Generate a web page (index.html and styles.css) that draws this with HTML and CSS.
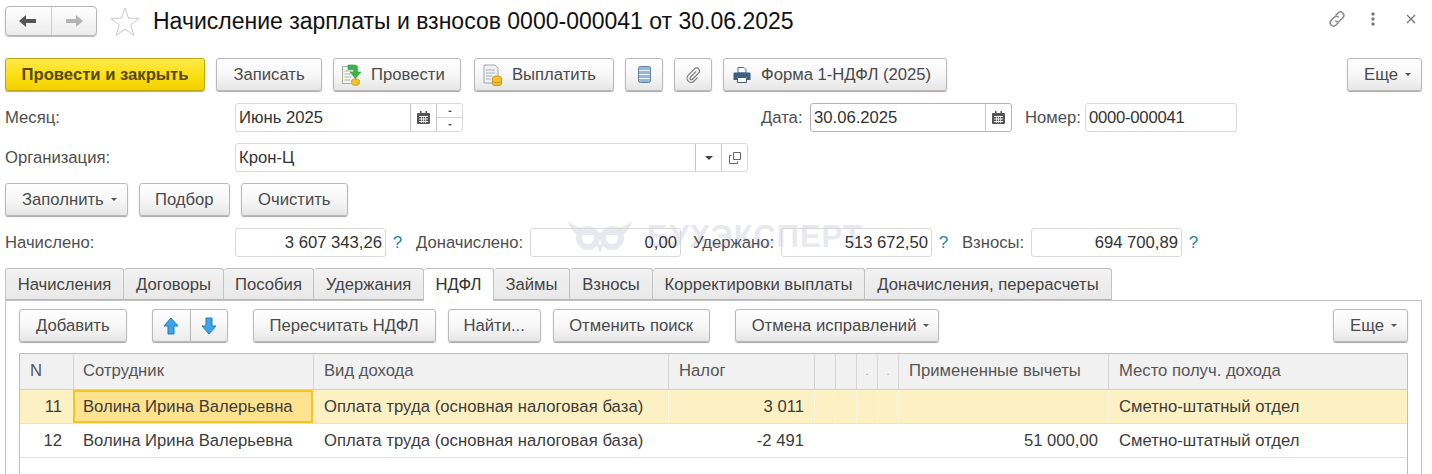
FILE: index.html
```html
<!DOCTYPE html>
<html lang="ru">
<head>
<meta charset="utf-8">
<title>Начисление зарплаты и взносов</title>
<link rel="stylesheet" href="styles.css">
</head>
<body>
<div class="page">
  <header class="head">
    <div class="nav">
      <span class="nav-btn"><svg width="18" height="14" viewBox="0 0 18 14"><path d="M0 7l7-6v4h10v4H7v4z" fill="#555"/></svg></span>
      <span class="nav-btn"><svg width="18" height="14" viewBox="0 0 18 14"><path d="M18 7l-7-6v4H1v4h10v4z" fill="#b4b4b4"/></svg></span>
    </div>
    <svg class="star" width="30" height="30" viewBox="0 0 30 30"><path d="M15 1l3.600 10.200 10.600.2-8.400 6.500 3 10.400L15 22.200l-8.800 6.100 3-10.400L.8 11.400l10.600-.2z" fill="none" stroke="#c9c9c9"/></svg>
    <h1 class="title">Начисление зарплаты и взносов 0000-000041 от 30.06.2025</h1>
    <div class="win-icons">
      <svg width="20" height="20" viewBox="0 0 20 20" fill="none" stroke="#8a8a8a" stroke-width="1.500"><path d="M8.500 6.500l2.500-2.500a3.300 3.300 0 0 1 4.800 4.700l-3 3a3.300 3.300 0 0 1-4.500 0"/><path d="M11.500 13.500L9 16a3.300 3.300 0 0 1-4.800-4.700l3-3a3.300 3.300 0 0 1 4.500 0"/></svg>
      <svg width="6" height="14" viewBox="0 0 6 14" fill="#777"><circle cx="3" cy="2" r="1.700"/><circle cx="3" cy="7" r="1.700"/><circle cx="3" cy="12" r="1.700"/></svg>
      <svg class="win-close" width="10" height="10" viewBox="0 0 10 10" stroke="#777" stroke-width="1.300"><path d="M1 1l8 8M9 1L1 9"/></svg>
    </div>
  </header>

  <div class="bar bar-command">
    <button class="btn btn-primary">Провести и закрыть</button>
    <button class="btn btn-save">Записать</button>
    <button class="btn btn-ico btn-post">
      <svg width="20" height="22" viewBox="0 0 20 22"><path d="M.5 2.500h11l2 2v15H.5z" fill="#f4f5ef" stroke="#a3ae9f"/><path d="M2.500 7h7M2.500 10h6M2.500 13h7M2.500 16h6" stroke="#a5b8a6"/><path d="M6 1h7a2.500 2.500 0 0 1 2.500 2.500V8H19l-5.500 6.500L8 8h3.500V5.500H6z" fill="#3cb44a" stroke="#2a9a3c" stroke-width=".6"/><ellipse cx="13.500" cy="16.500" rx="3.800" ry="1.700" fill="#f3c32c" stroke="#c9951a" stroke-width=".8"/><path d="M9.700 16.500v3.300c0 .9 1.700 1.500 3.800 1.500s3.800-.6 3.800-1.500v-3.300" fill="#f3c32c" stroke="#c9951a" stroke-width=".8"/></svg>
      Провести</button>
    <button class="btn btn-ico btn-pay">
      <svg width="20" height="24" viewBox="0 0 20 24"><path d="M1 2h11l3 3v15H1z" fill="#eef0f2" stroke="#a0a8b2"/><path d="M3 7h9M3 10h9M3 13h6M3 16h5" stroke="#a9b4c0"/><ellipse cx="14" cy="15" rx="4.500" ry="2" fill="#f3c32c" stroke="#c9951a"/><path d="M9.500 15v6c0 1 2 1.600 4.500 1.600s4.500-.6 4.500-1.600v-6" fill="#f3c32c" stroke="#c9951a"/><path d="M9.500 18c0 1 2 1.600 4.500 1.600s4.500-.6 4.500-1.600" fill="none" stroke="#c9951a"/></svg>
      Выплатить</button>
    <button class="btn btn-square"><svg width="13" height="17" viewBox="0 0 13 17"><rect x=".5" y=".5" width="12" height="16" rx="2" fill="#93b8d8" stroke="#5f83a2"/><path d="M1 4.500h11M1 8.500h11M1 12.500h11" stroke="#eaf1f7" stroke-width="1.100"/></svg></button>
    <button class="btn btn-square"><svg width="16" height="16" viewBox="0 0 18 18" fill="none" stroke="#7a7a7a" stroke-width="1.300"><path d="M12.500 5L6 11.500a1.600 1.600 0 0 0 2.300 2.300l7-7a3.200 3.200 0 0 0-4.600-4.600L3.500 9.500a4.600 4.600 0 0 0 6.500 6.500l4-4"/></svg></button>
    <button class="btn btn-ico btn-print">
      <svg width="18" height="16" viewBox="0 0 18 16"><path d="M5 .5h6l2 2V6H5z" fill="#fff" stroke="#55708c"/><path d="M1.500 5.500h15a1 1 0 0 1 1 1V13H14v-3H4v3H.5V6.500a1 1 0 0 1 1-1z" fill="#3f5f80"/><path d="M4.500 10.500h9v5h-9z" fill="#fff" stroke="#3f5f80"/></svg>
      Форма 1-НДФЛ (2025)</button>
    <button class="btn btn-more btn-end">Еще<i class="caret"></i></button>
  </div>

  <div class="row row-month">
    <label class="lbl lbl-first">Месяц:</label>
    <div class="field w-month">
      <span class="val">Июнь 2025</span>
      <span class="fb"><svg class="cal" width="13" height="13" viewBox="0 0 13 13"><path d="M1 2h11a1 1 0 0 1 1 1v9a1 1 0 0 1-1 1H1a1 1 0 0 1-1-1V3a1 1 0 0 1 1-1z" fill="#555"/><path d="M3 0h1.500v3H3zM8.500 0H10v3H8.500z" fill="#555"/><path d="M2 5.500h9M2 8h9M2 10.500h9" stroke="#fff" stroke-width=".9"/><path d="M4.500 5v7M6.500 5v7M8.500 5v7" stroke="#fff" stroke-width=".7"/></svg></span>
      <span class="fb spin"><i class="spin-up"></i><i class="spin-down"></i></span>
    </div>
    <label class="lbl lbl-date">Дата:</label>
    <div class="field field-strong w-date">
      <span class="val">30.06.2025</span>
      <span class="fb"><svg class="cal" width="13" height="13" viewBox="0 0 13 13"><path d="M1 2h11a1 1 0 0 1 1 1v9a1 1 0 0 1-1 1H1a1 1 0 0 1-1-1V3a1 1 0 0 1 1-1z" fill="#555"/><path d="M3 0h1.500v3H3zM8.500 0H10v3H8.500z" fill="#555"/><path d="M2 5.500h9M2 8h9M2 10.500h9" stroke="#fff" stroke-width=".9"/><path d="M4.500 5v7M6.500 5v7M8.500 5v7" stroke="#fff" stroke-width=".7"/></svg></span>
    </div>
    <label class="lbl lbl-num">Номер:</label>
    <div class="field w-num"><span class="val">0000-000041</span></div>
  </div>

  <div class="row row-org">
    <label class="lbl lbl-first">Организация:</label>
    <div class="field w-org">
      <span class="val">Крон-Ц</span>
      <span class="fb"><i class="caret caret-dark"></i></span>
      <span class="fb"><svg width="12" height="12" viewBox="0 0 12 12" fill="none" stroke="#666"><path d="M4.500.5h7v7h-7z"/><path d="M2.500 3.500h-2v8h8V9.500"/></svg></span>
    </div>
  </div>

  <div class="bar bar-fill">
    <button class="btn btn-more">Заполнить<i class="caret"></i></button>
    <button class="btn btn-pick">Подбор</button>
    <button class="btn btn-clear">Очистить</button>
  </div>

  <div class="row row-totals">
    <label class="lbl lbl-first">Начислено:</label>
    <div class="field w-sum"><span class="val num">3 607 343,26</span></div>
    <a class="help">?</a>
    <label class="lbl lbl-acc">Доначислено:</label>
    <div class="field w-sum"><span class="val num">0,00</span></div>
    <label class="lbl lbl-held">Удержано:</label>
    <div class="field w-sum"><span class="val num">513 672,50</span></div>
    <a class="help">?</a>
    <label class="lbl lbl-fees">Взносы:</label>
    <div class="field w-sum"><span class="val num">694 700,89</span></div>
    <a class="help">?</a>
  </div>

  <div class="watermark">
    <svg width="64" height="32" viewBox="0 0 64 32"><path d="M0 0c6 6 13 6 20 7 5 .7 9 2.500 12 5 3-2.500 7-4.300 12-5 7-1 14-1 20-7-2 7-5 11-9 14H9C5 11 2 7 0 0z" fill="#e8e9ef"/><g fill="none" stroke="#e8e9ef" stroke-width="6"><circle cx="20" cy="17" r="9"/><circle cx="44" cy="17" r="9"/></g><path d="M28 23h8l-4 9z" fill="#e8e9ef"/></svg>
    <span>БУХЭКСПЕРТ</span>
  </div>

  <nav class="tabs">
    <span class="tab">Начисления</span>
    <span class="tab">Договоры</span>
    <span class="tab">Пособия</span>
    <span class="tab">Удержания</span>
    <span class="tab tab-active">НДФЛ</span>
    <span class="tab">Займы</span>
    <span class="tab">Взносы</span>
    <span class="tab">Корректировки выплаты</span>
    <span class="tab">Доначисления, перерасчеты</span>
  </nav>

  <section class="panel">
    <div class="bar bar-panel">
      <button class="btn">Добавить</button>
      <div class="btn-group">
        <button class="btn btn-arrow"><svg width="16" height="18" viewBox="0 0 16 18"><path d="M8 1l7 8h-4v8H5V9H1z" fill="#3ea6e6" stroke="#1f7fbe"/></svg></button>
        <button class="btn btn-arrow"><svg width="16" height="18" viewBox="0 0 16 18"><path d="M8 17L1 9h4V1h6v8h4z" fill="#3ea6e6" stroke="#1f7fbe"/></svg></button>
      </div>
      <button class="btn btn-recalc">Пересчитать НДФЛ</button>
      <button class="btn btn-find">Найти...</button>
      <button class="btn btn-unfind">Отменить поиск</button>
      <button class="btn btn-more btn-cancel">Отмена исправлений<i class="caret"></i></button>
      <button class="btn btn-more btn-end">Еще<i class="caret"></i></button>
    </div>

    <div class="grid">
      <div class="tr thead">
        <span class="td">N</span>
        <span class="td">Сотрудник</span>
        <span class="td">Вид дохода</span>
        <span class="td">Налог</span>
        <span class="td"></span>
        <span class="td"></span>
        <span class="td td-dot">.</span>
        <span class="td td-dot">.</span>
        <span class="td">Примененные вычеты</span>
        <span class="td">Место получ. дохода</span>
      </div>
      <div class="tr tr-sel">
        <span class="td num">11</span>
        <span class="td td-cur">Волина Ирина Валерьевна</span>
        <span class="td td-kind">Оплата труда (основная налоговая база)</span>
        <span class="td num">3 011</span>
        <span class="td"></span>
        <span class="td"></span>
        <span class="td"></span>
        <span class="td"></span>
        <span class="td"></span>
        <span class="td">Сметно-штатный отдел</span>
      </div>
      <div class="tr">
        <span class="td num">12</span>
        <span class="td">Волина Ирина Валерьевна</span>
        <span class="td td-kind">Оплата труда (основная налоговая база)</span>
        <span class="td num">-2 491</span>
        <span class="td"></span>
        <span class="td"></span>
        <span class="td"></span>
        <span class="td"></span>
        <span class="td num">51 000,00</span>
        <span class="td">Сметно-штатный отдел</span>
      </div>
    </div>
  </section>
</div>
</body>
</html>
```

FILE: styles.css
```css
* { box-sizing: border-box; }
html, body { margin: 0; height: 100%; background: #fff; overflow: hidden; }
body { font: 16.67px/18px "Liberation Sans", Arial, sans-serif; color: #3c3c3c; }
.page { position: relative; z-index: 0; width: 1432px; height: 474px; padding: 5px 10px 0 5px; overflow: hidden; }

.head { display: flex; align-items: center; height: 32px; }
.nav { display: flex; width: 92px; height: 30px; border: 1px solid #b5b5b5; border-radius: 4px; background: linear-gradient(#fff, #ececec); box-shadow: 0 1px 1px #bbb; }
.nav-btn { flex: 1; display: flex; align-items: center; justify-content: center; }
.nav-btn + .nav-btn { border-left: 1px solid #cfcfcf; }
.star { margin: 1px 0 0 13px; }
.title { margin: 0 0 0 13px; font-size: 23px; font-weight: 400; line-height: 32px; color: #111; }
.win-icons { margin-left: auto; margin-right: 6px; display: flex; align-items: center; gap: 23px; height: 20px; margin-top: -5px; }
.win-close { margin-left: 7px; }

.bar { display: flex; align-items: flex-start; }
.bar-command { margin-top: 21px; height: 33px; gap: 11px; }
.bar-fill { margin-top: 11px; height: 33px; gap: 11px; }
.bar-panel { height: 33px; gap: 12px; }

.btn { height: 33px; padding: 0 16px; display: inline-flex; align-items: center; font: inherit; color: #4a4a4a; white-space: nowrap; background: linear-gradient(#fff 0%, #f6f6f6 55%, #e6e6e6 100%); border: 1px solid #b9b9b9; border-radius: 3px; box-shadow: 0 1px 1px #a8a8a8; }
.btn-primary { width: 200px; padding: 0; justify-content: center; font-weight: 700; color: #54480c; background: linear-gradient(#ffe94a 0%, #fbdf12 55%, #f2d000 100%); border-color: #c2a50c; }
.btn-save { width: 106px; padding: 0; justify-content: center; }
.btn-ico { padding: 0 0 0 8px; gap: 9px; }
.btn-post { width: 128px; }
.btn-pay { width: 140px; margin-left: 2px; }
.btn-print { width: 224px; gap: 10px; padding-left: 9px; }
.btn-square { width: 38px; padding: 0; justify-content: center; }
.btn-more { padding-right: 10px; }
.btn-pick { width: 91px; padding: 0; justify-content: center; }
.btn-clear { width: 107px; padding: 0; justify-content: center; }
.btn-end { margin-left: auto; }
.caret { display: inline-block; width: 0; height: 0; margin-left: 7px; border: 3px solid transparent; border-top: 3px solid #555; border-bottom: 0; }
.caret-dark { margin: 0; border-width: 4px 4px 0; border-top-color: #444; }

.row { display: flex; align-items: center; height: 29px; }
.row-month { margin-top: 12px; }
.row-org { margin-top: 11px; }
.row-totals { margin-top: 12px; }
.lbl { color: #4f4f4f; white-space: nowrap; }
.lbl-first { width: 230px; }
.lbl-date { margin-left: 298px; width: 49px; }
.lbl-num { margin-left: 13px; width: 60px; }
.lbl-acc { margin-left: 13px; width: 114px; }
.lbl-held { margin-left: 12px; width: 88px; }
.lbl-fees { margin-left: 13px; width: 69px; }

.field { display: flex; height: 29px; background: #fff; border: 1px solid #d9d9d9; border-radius: 3px; }
.field-strong { border-color: #b5b5b5; }
.val { flex: 1; min-width: 0; padding: 0 3px; line-height: 27px; color: #333; white-space: nowrap; }
.num { text-align: right; }
.fb { flex: none; width: 26px; display: flex; align-items: center; justify-content: center; border-left: 1px solid #c9c9c9; }
.spin { flex-direction: column; }
.spin i { flex: 1; width: 100%; display: flex; align-items: center; justify-content: center; }
.spin i::after { content: ""; border: 2.500px solid transparent; }
.spin-up::after { border-top: 0 !important; border-bottom-color: #555 !important; }
.spin-down { border-top: 1px solid #d2d2d2; }
.spin-down::after { border-bottom: 0 !important; border-top-color: #555 !important; }
.w-month { width: 228px; }
.w-date { width: 202px; }
.w-num { width: 152px; }
.w-num .val { letter-spacing: -.25px; }
.w-org { width: 513px; }
.w-sum { width: 151px; }
.help { width: 11px; margin-left: 6px; color: #1f7fb5; text-align: center; font-size: 17px; }

.watermark { position: absolute; left: 568px; top: 220px; z-index: -1; display: flex; align-items: center; gap: 15px; font-size: 31px; line-height: 34px; font-weight: 700; letter-spacing: 1px; color: #e8e9ef; pointer-events: none; }
.row-totals .field { background: transparent; }

.tabs { display: grid; grid-template-columns: 119px 100px 90px 110px 70px 76px 83px 212px 247px; justify-content: start; margin-top: 11px; height: 32px; position: relative; }
.tab { height: 32px; line-height: 31px; text-align: center; color: #444; background: linear-gradient(#f1f1f1, #e9e9e9); border: 1px solid #c2c2c2; border-left: 0; border-bottom: 1px solid #b5b5b5; border-radius: 3px 3px 0 0; white-space: nowrap; }
.tab:first-child { border-left: 1px solid #c2c2c2; }
.tab-active { position: relative; z-index: 1; height: 33px; background: #fff; color: #333; border-bottom: 0; }

.panel { width: 1417px; height: 174px; padding: 8px 13px 0; border: 1px solid #c2c2c2; border-bottom: 0; }
.btn-group { display: flex; margin-left: 13px; }
.btn-arrow { width: 38px; padding: 0; justify-content: center; background: linear-gradient(#fff, #ececec); }
.btn-arrow:first-child { border-right: 0; border-radius: 3px 0 0 3px; }
.btn-arrow:last-child { border-radius: 0 3px 3px 0; }
.btn-recalc { width: 183px; padding: 0; justify-content: center; margin-left: 13px; }
.btn-find { width: 93px; padding: 0; justify-content: center; }
.btn-unfind { width: 157px; padding: 0; justify-content: center; }
.btn-cancel { width: 204px; margin-left: 13px; padding: 0 0 0 16px; }

.grid { margin-top: 11px; width: 1389px; height: 122px; border: 1px solid #bdbdbd; border-bottom: 0; }
.tr { display: grid; grid-template-columns: 53px 240px 355px 146px 21px 21px 21px 21px 210px 1fr; height: 34px; border-bottom: 1px solid #e2e2e2; color: #3c3c3c; }
.thead { height: 36px; background: #f1f1f1; border-bottom: 1px solid #d0d0d0; color: #555; }
.td { padding: 0 10px; line-height: 33px; white-space: nowrap; overflow: hidden; border-left: 1px solid transparent; }
.td:first-child { border-left: 0; }
.td:nth-child(2) { padding-left: 9px; }
.td-kind { letter-spacing: .05px; }
.thead .td { line-height: 34px; border-left-color: #d6d6d6; }
.thead .td:first-child { border-left: 0; }
.td-dot { padding: 0; text-align: center; color: #aaa; font-size: 11px; }
.tr-sel { background: #fdf0c3; }
.tr-sel .td { border-left-color: #fff9e4; }
.tr-sel .td:first-child { border-left: 0; }
.tr-sel .td-cur { padding: 0 8px; line-height: 29px; background: #fde38f; border: 2px solid #f3c523; }
.tr:not(.thead) .td:first-child { padding-right: 11px; }
```
